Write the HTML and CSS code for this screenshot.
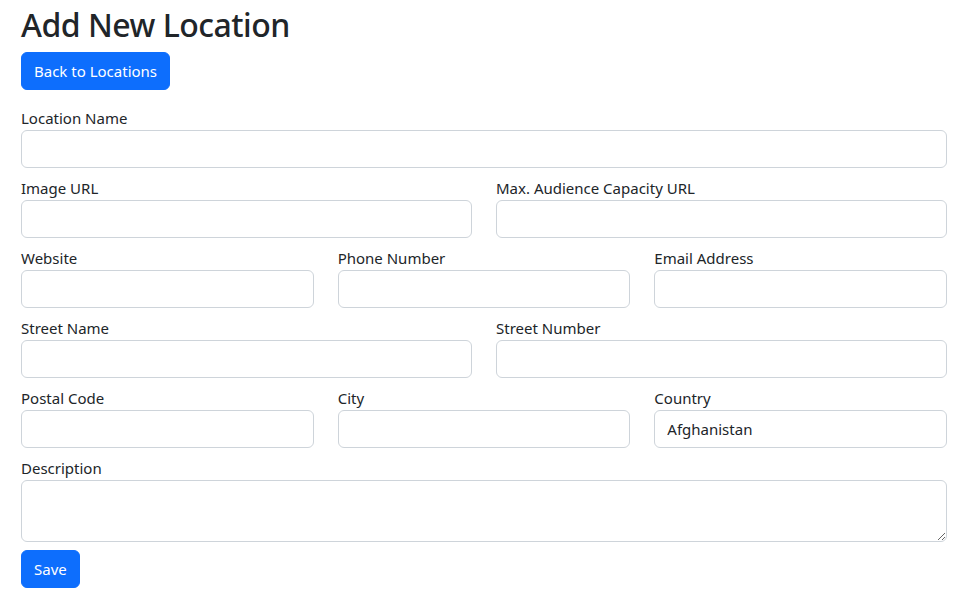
FILE: index.html
```html
<!DOCTYPE html>
<html lang="en">
<head>
<meta charset="utf-8">
<title>Add New Location</title>
<link rel="stylesheet" href="styles.css">
</head>
<body>
<div class="container">
  <h1 class="title">Add New Location</h1>
  <button class="btn btn-back" type="button">Back to Locations</button>
  <form class="form">
    <div class="row cols-1">
      <div class="group">
        <label class="label">Location Name</label>
        <input class="control" type="text">
      </div>
    </div>
    <div class="row cols-2">
      <div class="group">
        <label class="label">Image URL</label>
        <input class="control" type="text">
      </div>
      <div class="group">
        <label class="label">Max. Audience Capacity URL</label>
        <input class="control" type="text">
      </div>
    </div>
    <div class="row cols-3">
      <div class="group">
        <label class="label">Website</label>
        <input class="control" type="text">
      </div>
      <div class="group">
        <label class="label">Phone Number</label>
        <input class="control" type="text">
      </div>
      <div class="group">
        <label class="label">Email Address</label>
        <input class="control" type="text">
      </div>
    </div>
    <div class="row cols-2">
      <div class="group">
        <label class="label">Street Name</label>
        <input class="control" type="text">
      </div>
      <div class="group">
        <label class="label">Street Number</label>
        <input class="control" type="text">
      </div>
    </div>
    <div class="row cols-3">
      <div class="group">
        <label class="label">Postal Code</label>
        <input class="control" type="text">
      </div>
      <div class="group">
        <label class="label">City</label>
        <input class="control" type="text">
      </div>
      <div class="group">
        <label class="label">Country</label>
        <select class="control select">
          <option>Afghanistan</option>
        </select>
      </div>
    </div>
    <div class="row cols-1">
      <div class="group">
        <label class="label">Description</label>
        <textarea class="control textarea" rows="2"></textarea>
      </div>
    </div>
    <button class="btn btn-save" type="button">Save</button>
  </form>
</div>
</body>
</html>
```

FILE: styles.css
```css
* {
  box-sizing: border-box;
}

html, body {
  margin: 0;
  padding: 0;
  background: #ffffff;
}

body {
  font-family: "Noto Sans", "Open Sans", sans-serif;
  font-size: 15px;
  line-height: 24px;
  color: #212529;
}

.container {
  padding: 0 18px 0 21px;
}

.title {
  margin: 3px 0 5px;
  font-size: 32px;
  line-height: 44px;
  font-weight: 500;
  letter-spacing: -0.5px;
  color: #212529;
}

.btn {
  display: inline-block;
  font-family: inherit;
  font-size: 15px;
  line-height: 24px;
  padding: 6px 12px;
  border: 1px solid #0d6efd;
  border-radius: 6px;
  background: #0d6efd;
  color: #ffffff;
  cursor: pointer;
}

.btn-back {
  margin-bottom: 16px;
}

.form {
  display: flex;
  flex-direction: column;
}

.row {
  display: grid;
  column-gap: 24px;
}

.cols-1 { grid-template-columns: 1fr; }
.cols-2 { grid-template-columns: 1fr 1fr; }
.cols-3 { grid-template-columns: 1fr 1fr 1fr; }

.group {
  display: flex;
  flex-direction: column;
  margin-bottom: 8px;
  min-width: 0;
}

.label {
  display: block;
  line-height: 24px;
}

.control {
  display: block;
  width: 100%;
  height: 38px;
  padding: 6px 12px;
  font-family: inherit;
  font-size: 15px;
  line-height: 24px;
  color: #212529;
  background: #ffffff;
  border: 1px solid #ced4da;
  border-radius: 6px;
  margin: 0;
}

.select {
  appearance: none;
  -webkit-appearance: none;
}

.textarea {
  height: 62px;
  resize: vertical;
}

.btn-save {
  align-self: flex-start;
}
```
